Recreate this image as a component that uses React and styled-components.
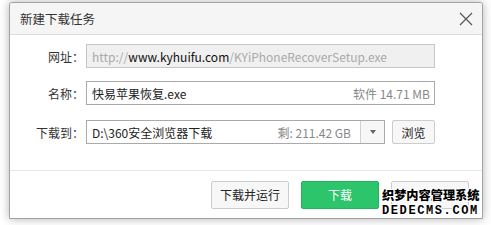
import React from "react";
import styled, { createGlobalStyle } from "styled-components";

const GlobalStyle = createGlobalStyle`
  html, body {
    margin: 0;
    padding: 0;
    background: #ffffff;
  }
  body {
    font-family: "Noto Sans CJK SC", "Noto Sans", sans-serif;
    font-size: 12px;
    color: #333;
  }
`;

const Page = styled.div`
  position: relative;
  width: 491px;
  height: 225px;
  padding: 2px 0 0 9px;
  box-sizing: border-box;
`;

const Dialog = styled.div`
  width: 474px;
  height: 217px;
  box-sizing: border-box;
  border: 1px solid #a3a3a3;
  border-radius: 3px 3px 0 0;
  background: #fff;
  box-shadow: 0 0 10px rgba(0, 0, 0, 0.3);
  display: flex;
  flex-direction: column;
`;

const TitleBar = styled.div`
  height: 31px;
  background: #f5f5f5;
  border-bottom: 1px solid #dcdcdc;
  display: flex;
  align-items: center;
  justify-content: space-between;
  padding: 0 9px 0 10px;
  border-radius: 3px 3px 0 0;
`;

const Title = styled.div`
  font-size: 12.5px;
  color: #333;
`;

const CloseBtn = styled.button`
  width: 15px;
  height: 15px;
  padding: 0;
  border: none;
  background: none;
  display: flex;
  align-items: center;
  justify-content: center;
`;

const Form = styled.div`
  flex: 1;
  padding: 9px 0 0 0;
  border-bottom: 1px solid #e6e6e6;
`;

const Row = styled.div`
  display: flex;
  align-items: center;
  margin-top: ${(p) => p.$mt || 0}px;
`;

const Label = styled.label`
  width: 74px;
  margin-right: 2px;
  text-align: right;
  font-size: 12px;
  color: #333;
`;

const Field = styled.div`
  width: ${(p) => p.$w}px;
  height: 24px;
  box-sizing: border-box;
  border: 1px solid ${(p) => (p.$disabled ? "#c6c6c6" : "#aaaaaa")};
  background: ${(p) => (p.$disabled ? "#f0f0f0" : "#fff")};
  display: flex;
  align-items: center;
  padding: 0 4px 0 5px;
  font-size: 12px;
  white-space: nowrap;
  overflow: hidden;
`;

const Dim = styled.span`
  color: #aaa;
`;

const Strong = styled.span`
  color: #111;
`;

const Value = styled.span`
  flex: 1;
  color: #222;
`;

const Hint = styled.span`
  color: #888;
`;

const PathBox = styled.div`
  width: 299px;
  height: 24px;
  box-sizing: border-box;
  border: 1px solid #aaaaaa;
  display: flex;
`;

const PathText = styled.div`
  flex: 1;
  display: flex;
  align-items: center;
  padding: 0 9px 0 5px;
  white-space: nowrap;
`;

const Arrow = styled.div`
  width: 23px;
  border-left: 1px solid #d0d0d0;
  background: #f7f7f7;
  display: flex;
  align-items: center;
  justify-content: center;
  &::after {
    content: "";
    border-left: 3.5px solid transparent;
    border-right: 3.5px solid transparent;
    border-top: 4px solid #666;
  }
`;

const Button = styled.button`
  font-family: inherit;
  font-size: 12px;
  height: ${(p) => p.$h || 28}px;
  width: ${(p) => p.$w}px;
  box-sizing: border-box;
  border-radius: 2px;
  border: 1px solid ${(p) => (p.$primary ? "#25b25f" : "#cccccc")};
  background: ${(p) => (p.$primary ? "#2dc56c" : "#f7f7f7")};
  color: ${(p) => (p.$primary ? "#fff" : "#222")};
  padding: 0;
  cursor: pointer;
`;

const Footer = styled.div`
  height: 47px;
  display: flex;
  align-items: center;
  justify-content: flex-end;
  gap: 12px;
  padding: 0 13px 0 0;
  box-sizing: border-box;
`;

const Watermark = styled.div`
  position: absolute;
  left: 382px;
  top: 189px;
  width: 100px;
  font-weight: bold;
  color: #000;
  text-shadow: 1px 0 0 #fff, -1px 0 0 #fff, 0 1px 0 #fff, 0 -1px 0 #fff,
    1px 1px 0 #fff, -1px -1px 0 #fff, 1px -1px 0 #fff, -1px 1px 0 #fff;
  line-height: 1;
`;

const WmCn = styled.div`
  font-size: 12.2px;
  font-weight: 900;
`;

const WmEn = styled.div`
  margin-top: 4px;
  font-family: "Liberation Mono", monospace;
  font-size: 12px;
  letter-spacing: 1.6px;
`;

export default function App() {
  return (
    <Page>
      <GlobalStyle />
      <Dialog>
        <TitleBar>
          <Title>新建下载任务</Title>
          <CloseBtn aria-label="关闭">
            <svg width="14" height="14" viewBox="0 0 14 14">
              <path d="M1 1 L13 13 M13 1 L1 13" stroke="#555" strokeWidth="1.2" />
            </svg>
          </CloseBtn>
        </TitleBar>
        <Form>
          <Row>
            <Label>网址：</Label>
            <Field $w={349} $disabled>
              <Dim>http://</Dim>
              <Strong>www.kyhuifu.com</Strong>
              <Dim>/KYiPhoneRecoverSetup.exe</Dim>
            </Field>
          </Row>
          <Row $mt={13}>
            <Label>名称：</Label>
            <Field $w={349}>
              <Value>快易苹果恢复.exe</Value>
              <Hint>软件 14.71 MB</Hint>
            </Field>
          </Row>
          <Row $mt={15}>
            <Label>下载到：</Label>
            <PathBox>
              <PathText>
                <Value>D:\360安全浏览器下载</Value>
                <Hint>剩: 211.42 GB</Hint>
              </PathText>
              <Arrow />
            </PathBox>
            <Button $w={43} $h={24} style={{ marginLeft: 7 }}>
              浏览
            </Button>
          </Row>
        </Form>
        <Footer>
          <Button $w={78}>下载并运行</Button>
          <Button $w={78} $primary>
            下载
          </Button>
          <Button $w={78}>取消</Button>
        </Footer>
      </Dialog>
      <Watermark>
        <WmCn>织梦内容管理系统</WmCn>
        <WmEn>DEDECMS.COM</WmEn>
      </Watermark>
    </Page>
  );
}
